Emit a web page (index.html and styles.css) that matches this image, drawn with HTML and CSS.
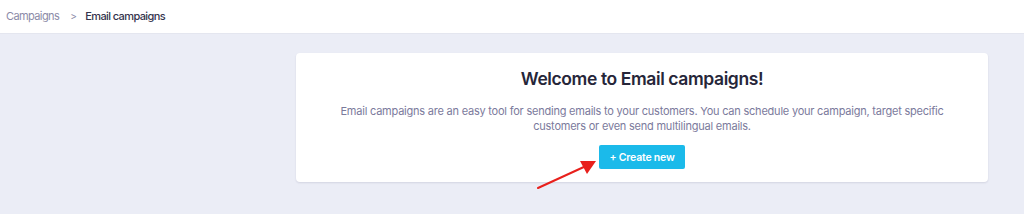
FILE: index.html
```html
<!DOCTYPE html>
<html>
<head>
<meta charset="utf-8">
<link rel="stylesheet" href="styles.css">
</head>
<body>
<header class="topbar">
  <nav class="crumbs">
    <span class="crumb-link">Campaigns</span>
    <span class="crumb-sep">&gt;</span>
    <span class="crumb-current">Email campaigns</span>
  </nav>
</header>
<main class="content">
  <section class="card">
    <h1 class="card-title">Welcome to Email campaigns!</h1>
    <p class="card-text">Email campaigns are an easy tool for sending emails to your customers. You can schedule your campaign, target specific customers or even send multilingual emails.</p>
    <div class="btn-wrap">
      <button class="btn-create">+ Create new</button>
      <svg class="arrow" width="64" height="34" viewBox="0 0 64 34">
        <line x1="2" y1="31" x2="50" y2="9" stroke="#e8201c" stroke-width="2" stroke-linecap="round"/>
        <polygon points="60,4 44,4 51,17" fill="#e8201c"/>
      </svg>
    </div>
  </section>
</main>
</body>
</html>
```
FILE: styles.css
```css
* { box-sizing: border-box; }
html, body { margin: 0; padding: 0; }
body {
  width: 1024px;
  height: 214px;
  overflow: hidden;
  background: #ebedf6;
  font-family: Inter, "Noto Sans", sans-serif;
}
.topbar {
  height: 34px;
  background: #ffffff;
  border-bottom: 1px solid #e4e6ef;
  display: flex;
  align-items: center;
  padding: 0 6px 2px;
}
.crumbs {
  display: flex;
  align-items: center;
  font-size: 11px;
  letter-spacing: -0.6px;
}
.crumb-link { color: #8c8ba8; }
.crumb-sep { color: #8c8ba8; margin: 0 9px 0 11px; font-size: 10px; }
.crumb-current { color: #34344d; font-weight: 500; }
.content {
  padding: 19px 36px 0 296px;
}
.card {
  width: 692px;
  height: 129px;
  background: #ffffff;
  border-radius: 4px;
  box-shadow: 0 1px 2px rgba(40, 44, 80, 0.12);
  display: flex;
  flex-direction: column;
  align-items: center;
  padding-top: 16px;
}
.card-title {
  margin: 0;
  font-size: 17.5px;
  font-weight: 600;
  color: #262639;
  line-height: 20px;
  letter-spacing: -0.4px;
}
.card-text {
  margin: 15px 0 0;
  width: 620px;
  text-align: center;
  font-size: 11px;
  line-height: 15px;
  letter-spacing: -0.22px;
  color: #7b7a9c;
}
.btn-wrap {
  position: relative;
  margin-top: 11px;
}
.btn-create {
  display: block;
  width: 86px;
  height: 24px;
  border: none;
  border-radius: 2px;
  background: #1bbaea;
  color: #ffffff;
  font-family: Inter, "Noto Sans", sans-serif;
  font-size: 10.5px;
  font-weight: 600;
  letter-spacing: -0.2px;
  padding: 0;
}
.arrow {
  position: absolute;
  left: -63px;
  top: 12px;
}
```
